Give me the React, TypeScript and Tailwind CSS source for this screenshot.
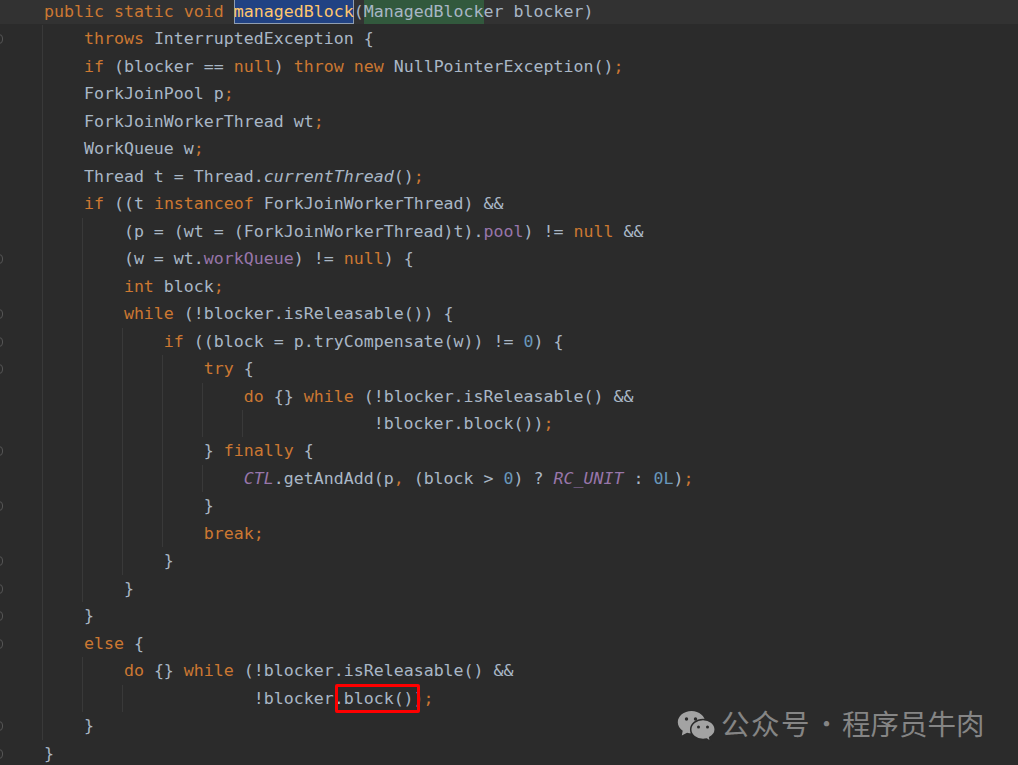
import type { ReactNode } from 'react';

const K = ({ children }: { children: ReactNode }) => <span className="text-[#cc7832]">{children}</span>;
const F = ({ children }: { children: ReactNode }) => <span className="text-[#9876aa]">{children}</span>;
const SF = ({ children }: { children: ReactNode }) => <span className="italic text-[#9876aa]">{children}</span>;
const N = ({ children }: { children: ReactNode }) => <span className="text-[#6897bb]">{children}</span>;

// indent guides: which lines each one runs through
const GUIDES = [
  { cls: 'left-[42px]', ranges: [[1, 26]] },
  { cls: 'left-[82px]', ranges: [[8, 21], [24, 25]] },
  { cls: 'left-[122px]', ranges: [[12, 20], [25, 25]] },
  { cls: 'left-[162px]', ranges: [[13, 19]] },
  { cls: 'left-[202px]', ranges: [[14, 15], [17, 17]] },
  { cls: 'left-[242px]', ranges: [[15, 15]] },
];

const FOLDS = [1, 9, 11, 12, 13, 16, 18, 20, 21, 22, 23, 26, 27];

const LINES: ReactNode[] = [
  <>
    {'    '}<K>public static void </K>
    <span className="inline-block h-[26.4px] bg-[#214283] text-[#ffc66d] ring-1 ring-inset ring-[#8f9db0]">managedBlock</span>
    (<span className="inline-block h-[26.4px] bg-[#32593d]">ManagedBlock</span>er blocker)
  </>,
  <>{'        '}<K>throws </K>InterruptedException {'{'}</>,
  <>{'        '}<K>if </K>(blocker == <K>null</K>) <K>throw new </K>NullPointerException()<K>;</K></>,
  <>{'        '}ForkJoinPool p<K>;</K></>,
  <>{'        '}ForkJoinWorkerThread wt<K>;</K></>,
  <>{'        '}WorkQueue w<K>;</K></>,
  <>{'        '}Thread t = Thread.<span className="italic">currentThread</span>()<K>;</K></>,
  <>{'        '}<K>if </K>((t <K>instanceof </K>ForkJoinWorkerThread) &amp;&amp;</>,
  <>{'            '}(p = (wt = (ForkJoinWorkerThread)t).<F>pool</F>) != <K>null </K>&amp;&amp;</>,
  <>{'            '}(w = wt.<F>workQueue</F>) != <K>null</K>) {'{'}</>,
  <>{'            '}<K>int </K>block<K>;</K></>,
  <>{'            '}<K>while </K>(!blocker.isReleasable()) {'{'}</>,
  <>{'                '}<K>if </K>((block = p.tryCompensate(w)) != <N>0</N>) {'{'}</>,
  <>{'                    '}<K>try </K>{'{'}</>,
  <>{'                        '}<K>do </K>{'{}'} <K>while </K>(!blocker.isReleasable() &amp;&amp;</>,
  <>{'                                     '}!blocker.block())<K>;</K></>,
  <>{'                    '}{'} '}<K>finally </K>{'{'}</>,
  <>{'                        '}<SF>CTL</SF>.getAndAdd(p<K>, </K>(block &gt; <N>0</N>) ? <SF>RC_UNIT</SF> : <N>0L</N>)<K>;</K></>,
  <>{'                    '}{'}'}</>,
  <>{'                    '}<K>break;</K></>,
  <>{'                '}{'}'}</>,
  <>{'            '}{'}'}</>,
  <>{'        '}{'}'}</>,
  <>{'        '}<K>else </K>{'{'}</>,
  <>{'            '}<K>do </K>{'{}'} <K>while </K>(!blocker.isReleasable() &amp;&amp;</>,
  <>{'                         '}!blocker.block())<K>;</K></>,
  <>{'        '}{'}'}</>,
  <>{'    '}{'}'}</>,
];

function WeChatIcon() {
  return (
    <svg width="39" height="32" viewBox="0 0 39 32" className="shrink-0">
      <path d="M14.5 1C6.8 1 .8 6.100 .8 12.300c0 3.500 1.900 6.500 4.900 8.500L4.800 25.500l5.300-2.800c1.400.4 2.900.6 4.400.6 7.700 0 13.700-5 13.700-11S22.200 1 14.500 1z" fill="#a3a3a3" />
      <path d="M26 9.500c-6.800 0-12.300 4.500-12.300 10s5.500 10 12.300 10c1.300 0 2.500-.2 3.700-.5l3.700 2.500-.7-4.200c3.300-1.800 5.500-4.600 5.500-7.800 0-5.500-5.400-10-12.200-10z" fill="#a3a3a3" stroke="#2b2b2b" strokeWidth="1.500" />
      <circle cx="9.500" cy="9" r="1.700" fill="#2b2b2b" />
      <circle cx="18.500" cy="9" r="1.700" fill="#2b2b2b" />
      <circle cx="21.500" cy="17" r="1.500" fill="#2b2b2b" />
      <circle cx="30.500" cy="17" r="1.500" fill="#2b2b2b" />
    </svg>
  );
}

export default function App() {
  return (
    <div className="relative h-screen overflow-hidden bg-[#2b2b2b]">
      <div className="-mt-[2.05px] font-['DejaVu_Sans_Mono',monospace] text-[16.6px] leading-[27.48px] text-[#a9b7c6]">
        {LINES.map((line, i) => (
          <div key={i} className="relative h-[27.48px] whitespace-pre pl-[4px]">
            {i === 0 && <span className="absolute inset-x-0 top-0 h-[26.4px] bg-[#323232]" />}
            {FOLDS.includes(i) && (
              <span className="absolute -left-[5px] top-[9px] h-[10px] w-[8px] rounded-sm border border-[#555555]" />
            )}
            {GUIDES.filter((g) => g.ranges.some(([a, b]) => i >= a && i <= b)).map((g) => (
              <span key={g.cls} className={`absolute inset-y-0 w-px bg-[#393939] ${g.cls}`} />
            ))}
            <span className="relative">{line}</span>
            {i === 25 && (
              <span className="absolute left-[335px] -top-[1px] h-[29px] w-[85px] rounded-[2px] border-[3px] border-[#ff0000]" />
            )}
          </div>
        ))}
      </div>
      <div className="absolute left-[677px] top-[707px] flex items-center gap-[5px]">
        <WeChatIcon />
        <div className="flex whitespace-pre pb-[5px] font-['Noto_Sans_CJK_SC',sans-serif] text-[28.5px] leading-[32px] text-[#858585]">
          <span className="tracking-[1.5px]">公众号</span>
          <span className="w-[31px] text-center font-light">·</span>
          <span>程序员牛肉</span>
        </div>
      </div>
    </div>
  );
}
